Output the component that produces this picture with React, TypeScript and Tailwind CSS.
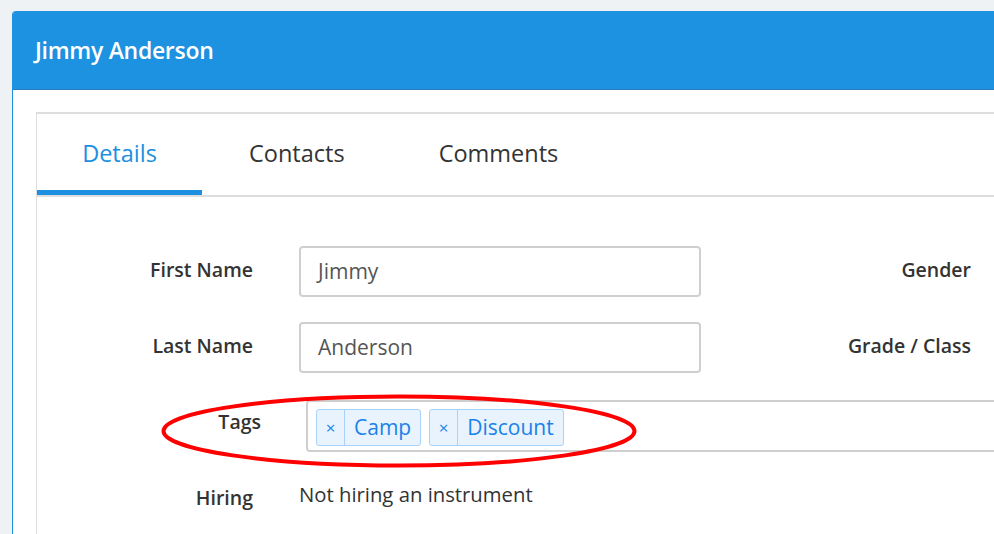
import React from "react";

const font = { fontFamily: '"Open Sans", "Noto Sans", sans-serif' };

function Tag({ label }: { label: string }) {
  return (
    <div className="flex h-[37px] items-stretch rounded-[3px] border border-[#a9d2fa] bg-[#e8f3fe] text-[#1a82ea]">
      <span className="flex w-[28px] items-center justify-center border-r border-[#a9d2fa] text-[17px] leading-none">
        ×
      </span>
      <span className="flex items-center px-[9px] text-[21px] leading-none">{label}</span>
    </div>
  );
}

function Row({
  label,
  value,
  side,
}: {
  label: string;
  value: string;
  side: string;
}) {
  return (
    <div className="flex items-center">
      <div className="w-[153px] pb-[4px] text-right text-[19.5px] font-semibold text-[#333]">{label}</div>
      <div className="ml-[46px] flex h-[51px] w-[402px] items-center rounded-[4px] border-2 border-[#cfcfcf] px-[17px] pt-[1px] text-[21px] text-[#555]">
        {value}
      </div>
      <div className="w-[270px] pb-[4px] text-right text-[19.5px] font-semibold text-[#333]">{side}</div>
    </div>
  );
}

export default function App() {
  const tabs = ["Details", "Contacts", "Comments"];

  return (
    <div className="relative h-[534px] w-[994px] overflow-hidden bg-[#eef2f4]" style={font}>
      <div className="ml-[12px] mt-[11px] w-[1100px] overflow-hidden rounded-tl-[4px] border-l border-[#1c92e0] bg-white">
        {/* Header */}
        <div className="flex h-[79px] items-center border-b border-[#2d7dc2] bg-[#1c92e0] pl-[22px]">
          <h1 className="text-[23px] font-semibold tracking-[-0.3px] text-white">Jimmy Anderson</h1>
        </div>

        {/* Body */}
        <div className="pl-[23px] pt-[22px]">
          <div className="h-[500px] border-l border-t-2 border-[#dddddd]">
            {/* Tabs */}
            <div className="flex h-[83px] border-b-2 border-[#dddddd]">
              {tabs.map((t, i) => (
                <div
                  key={t}
                  className={
                    i === 0
                      ? "flex w-[165px] items-center justify-center border-b-[5px] border-[#1c8fe0] pt-[3px] text-[23.5px] text-[#1c8fe0]"
                      : "flex items-center px-[47px] pb-[2px] text-[23.5px] text-[#333]"
                  }
                >
                  {t}
                </div>
              ))}
            </div>

            {/* Form */}
            <div className="flex flex-col pl-[63px] pt-[49px]">
              <Row label="First Name" value="Jimmy" side="Gender" />
              <div className="mt-[25px]">
                <Row label="Last Name" value="Anderson" side="Grade / Class" />
              </div>

              <div className="mt-[27px] flex items-start">
                <div className="w-[161px] pt-[8px] text-right text-[19.5px] font-semibold leading-[28px] text-[#333]">
                  Tags
                </div>
                <div className="ml-[45px] flex h-[52px] flex-1 items-center gap-[8px] rounded-l-[4px] border-2 border-[#cfcfcf] pl-[8px] pt-[2px]">
                  <Tag label="Camp" />
                  <Tag label="Discount" />
                </div>
              </div>

              <div className="mt-[28px] flex items-start">
                <div className="w-[153px] pt-[4px] text-right text-[19.5px] font-semibold leading-[28px] text-[#333]">
                  Hiring
                </div>
                <div className="ml-[46px] text-[20.3px] leading-[28px] text-[#333]">Not hiring an instrument</div>
              </div>
            </div>
          </div>
        </div>
      </div>

      {/* Red annotation ellipse */}
      <svg className="pointer-events-none absolute left-0 top-0" width="994" height="534">
        <ellipse cx="399" cy="431" rx="235.5" ry="34.5" fill="none" stroke="#ff0000" strokeWidth="4" />
      </svg>
    </div>
  );
}
